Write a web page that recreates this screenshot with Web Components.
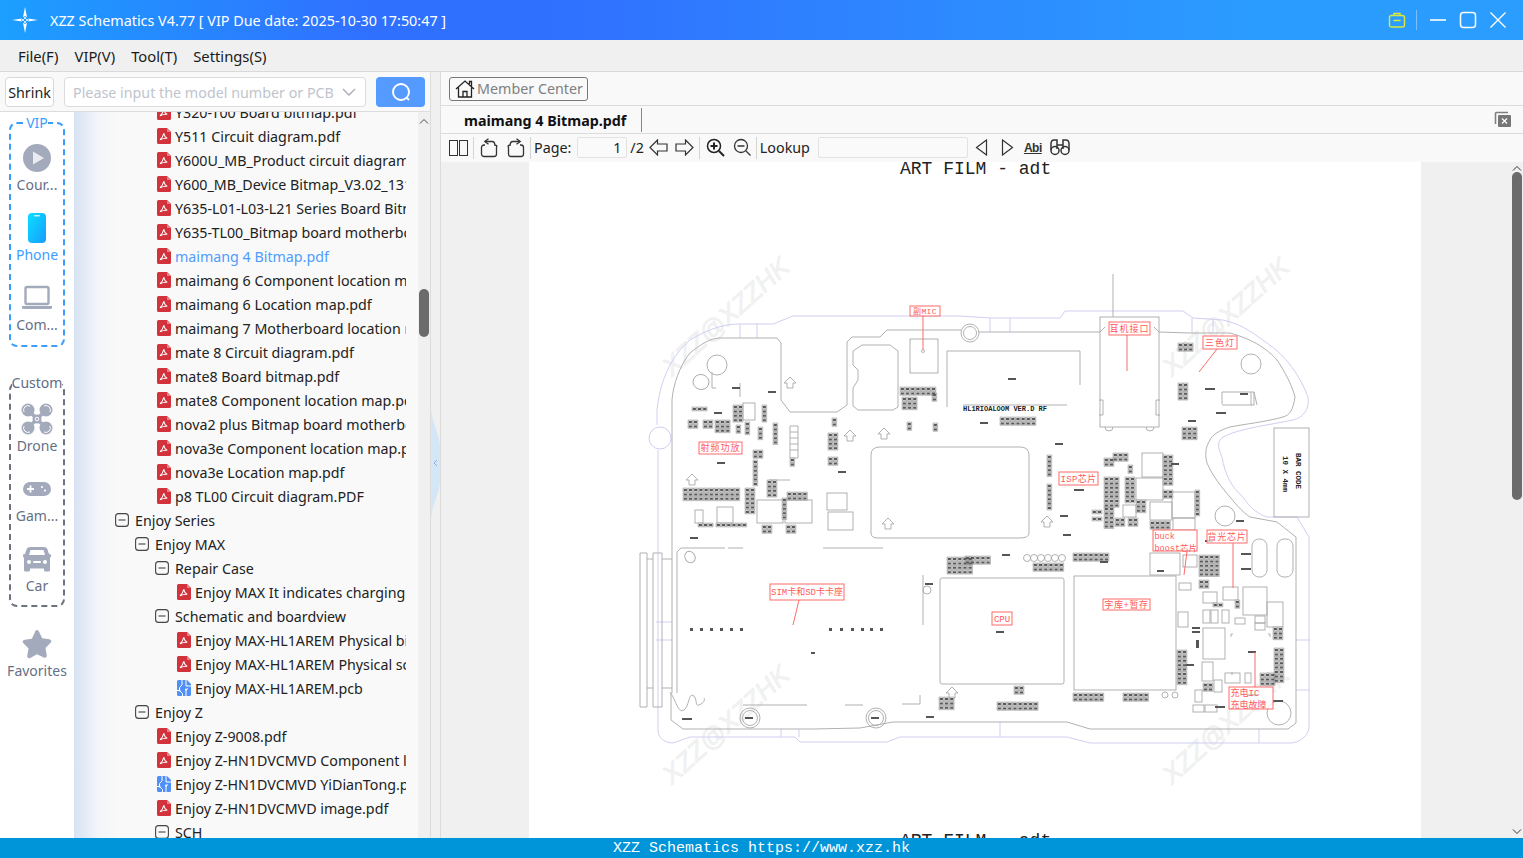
<!DOCTYPE html>
<html>
<head>
<meta charset="utf-8">
<title>XZZ Schematics</title>
<style>
  html, body { margin: 0; height: 100%; overflow: hidden; background: #f0f0f0; font-family: "Noto Sans", "Noto Sans CJK SC", sans-serif; }
  #app { display: grid; grid-template-rows: 40px 32px 1fr 20px; height: 858px; }
  #work { display: flex; min-height: 0; }
  #left { width: 430px; display: flex; flex-direction: column; min-height: 0; }
  #left-body { flex: 1; display: flex; min-height: 0; }
</style>
</head>
<body>
<div id="app">
  <xzz-titlebar>XZZ Schematics V4.77 [ VIP Due date: 2025-10-30 17:50:47 ]</xzz-titlebar>
  <xzz-menubar>
    <span>File(F)</span><span>VIP(V)</span><span>Tool(T)</span><span>Settings(S)</span>
  </xzz-menubar>
  <div id="work">
    <div id="left">
      <xzz-search></xzz-search>
      <div id="left-body">
        <xzz-sidebar>
          <xzz-nav-group label="VIP" tone="blue">
            <xzz-nav-item icon="play">Cour...</xzz-nav-item>
            <xzz-nav-item icon="phone" active>Phone</xzz-nav-item>
            <xzz-nav-item icon="laptop">Com...</xzz-nav-item>
          </xzz-nav-group>
          <xzz-nav-group label="Custom" tone="gray">
            <xzz-nav-item icon="drone">Drone</xzz-nav-item>
            <xzz-nav-item icon="game">Gam...</xzz-nav-item>
            <xzz-nav-item icon="car">Car</xzz-nav-item>
          </xzz-nav-group>
          <xzz-nav-item icon="star" class="fav">Favorites</xzz-nav-item>
        </xzz-sidebar>
        <xzz-tree>
          <tree-row kind="pdf" depth="2">Y320-T00 Board bitmap.pdf</tree-row>
          <tree-row kind="pdf" depth="2">Y511 Circuit diagram.pdf</tree-row>
          <tree-row kind="pdf" depth="2">Y600U_MB_Product circuit diagram.pdf</tree-row>
          <tree-row kind="pdf" depth="2">Y600_MB_Device Bitmap_V3.02_1313.pdf</tree-row>
          <tree-row kind="pdf" depth="2">Y635-L01-L03-L21 Series Board Bitmap.pdf</tree-row>
          <tree-row kind="pdf" depth="2">Y635-TL00_Bitmap board motherboard.pdf</tree-row>
          <tree-row kind="pdf" depth="2" selected>maimang 4 Bitmap.pdf</tree-row>
          <tree-row kind="pdf" depth="2">maimang 6 Component location map.pdf</tree-row>
          <tree-row kind="pdf" depth="2">maimang 6 Location map.pdf</tree-row>
          <tree-row kind="pdf" depth="2">maimang 7 Motherboard location map.pdf</tree-row>
          <tree-row kind="pdf" depth="2">mate 8 Circuit diagram.pdf</tree-row>
          <tree-row kind="pdf" depth="2">mate8 Board bitmap.pdf</tree-row>
          <tree-row kind="pdf" depth="2">mate8 Component location map.pdf</tree-row>
          <tree-row kind="pdf" depth="2">nova2 plus Bitmap board motherboard.pdf</tree-row>
          <tree-row kind="pdf" depth="2">nova3e Component location map.pdf</tree-row>
          <tree-row kind="pdf" depth="2">nova3e Location map.pdf</tree-row>
          <tree-row kind="pdf" depth="2">p8 TL00 Circuit diagram.PDF</tree-row>
          <tree-row kind="open" depth="0">Enjoy Series</tree-row>
          <tree-row kind="open" depth="1">Enjoy MAX</tree-row>
          <tree-row kind="open" depth="2">Repair Case</tree-row>
          <tree-row kind="pdf" depth="3">Enjoy MAX It indicates charging.pdf</tree-row>
          <tree-row kind="open" depth="2">Schematic and boardview</tree-row>
          <tree-row kind="pdf" depth="3">Enjoy MAX-HL1AREM Physical bitmap.pdf</tree-row>
          <tree-row kind="pdf" depth="3">Enjoy MAX-HL1AREM Physical schematic.pdf</tree-row>
          <tree-row kind="pcb" depth="3">Enjoy MAX-HL1AREM.pcb</tree-row>
          <tree-row kind="open" depth="1">Enjoy Z</tree-row>
          <tree-row kind="pdf" depth="2">Enjoy Z-9008.pdf</tree-row>
          <tree-row kind="pdf" depth="2">Enjoy Z-HN1DVCMVD Component location.pdf</tree-row>
          <tree-row kind="pcb" depth="2">Enjoy Z-HN1DVCMVD YiDianTong.pcb</tree-row>
          <tree-row kind="pdf" depth="2">Enjoy Z-HN1DVCMVD image.pdf</tree-row>
          <tree-row kind="open" depth="2">SCH</tree-row>
        </xzz-tree>
      </div>
    </div>
    <xzz-splitter></xzz-splitter>
    <xzz-viewer file="maimang 4 Bitmap.pdf"><xzz-pcb></xzz-pcb></xzz-viewer>
  </div>
  <xzz-statusbar>XZZ Schematics https://www.xzz.hk</xzz-statusbar>
</div>

<script>
const UI_FONT = '"Noto Sans", "Noto Sans CJK SC", sans-serif';

class XzzTitlebar extends HTMLElement {
  constructor() {
    super();
    this.attachShadow({mode: 'open'}).innerHTML = `
      <style>
        :host { display: flex; align-items: center; height: 40px; color: #fff; font: 14.35px ${UI_FONT};
          background: linear-gradient(90deg, #1c9fff 0, #3070ff 24%, #3070ff 36%, #2b9cff 82%, #2b9dff 100%); }
        .logo { margin-left: 12px; width: 26px; height: 26px; }
        .name { margin-left: 12px; flex: 1; white-space: nowrap; }
        .tools { display: flex; align-items: center; }
        .bag { width: 18px; height: 18px; margin-right: 10px; }
        .sep { width: 1px; height: 20px; background: #7cc0ff; margin-right: 12px; }
        .win { width: 18px; height: 18px; margin-right: 12px; }
        .win:last-child { margin-right: 16px; }
      </style>
      <svg class="logo" viewBox="0 0 26 26" fill="#fff">
        <path d="M13 0l2 10.2L13 9l-2 1.2zM13 26l-2-10.2 2 1.2 2-1.2zM0 13l10.2-1.6L9 13l1.2 1.6zM26 13l-10.2 1.6L17 13l-1.2-1.6z"/>
        <circle cx="13" cy="11" r="1"/><circle cx="13" cy="15" r="1"/><circle cx="11" cy="13" r="1"/><circle cx="15" cy="13" r="1"/>
      </svg>
      <div class="name"><slot></slot></div>
      <div class="tools">
        <svg class="bag" viewBox="0 0 18 18" fill="none" stroke="#d9e83a" stroke-width="1.4">
          <rect x="1.5" y="4.5" width="15" height="11.5" rx="2"/><path d="M6 4.5V2.500h6v2M5.5 9.5h7"/>
        </svg>
        <div class="sep"></div>
        <svg class="win" viewBox="0 0 18 18" stroke="#fff" stroke-width="1.6"><path d="M1 9h16"/></svg>
        <svg class="win" viewBox="0 0 18 18" fill="none" stroke="#fff" stroke-width="1.5"><rect x="1.5" y="1.5" width="15" height="15" rx="3"/></svg>
        <svg class="win" viewBox="0 0 18 18" stroke="#fff" stroke-width="1.4"><path d="M1.5 1.5l15 15M16.5 1.5l-15 15"/></svg>
      </div>`;
  }
}
customElements.define('xzz-titlebar', XzzTitlebar);

class XzzMenubar extends HTMLElement {
  constructor() {
    super();
    this.attachShadow({mode: 'open'}).innerHTML = `
      <style>
        :host { display: flex; align-items: center; gap: 16px; box-sizing: border-box; height: 32px; padding: 1px 0 0 18px;
          background: #f0f0f0; border-bottom: 1px solid #d9d9d9; color: #1a1a1a; font: 14.8px ${UI_FONT}; }
      </style>
      <slot></slot>`;
  }
}
customElements.define('xzz-menubar', XzzMenubar);

class XzzSearch extends HTMLElement {
  constructor() {
    super();
    this.attachShadow({mode: 'open'}).innerHTML = `
      <style>
        :host { display: flex; align-items: center; box-sizing: border-box; height: 40px; padding: 1px 5px 0; background: #f9f9f9;
          border-bottom: 1px solid #dcdcdc; font: 14.3px ${UI_FONT}; }
        .shrink { box-sizing: border-box; width: 49px; height: 30px; display: flex; align-items: center; justify-content: center;
          background: #fff; border: 1px solid #d8d8d8; border-radius: 4px; color: #222; }
        .combo { box-sizing: border-box; width: 302px; height: 30px; margin-left: 10px; padding: 0 9px 0 8px; display: flex; align-items: center;
          justify-content: space-between; background: #fff; border: 1px solid #dcdcdc; border-radius: 4px; color: #c0c4cc; white-space: nowrap; }
        .go { width: 49px; height: 30px; margin-left: 10px; background: #559bff; border-radius: 4px; display: flex; align-items: center; justify-content: center; }
      </style>
      <div class="shrink">Shrink</div>
      <div class="combo"><span>Please input the model number or PCB</span>
        <svg width="14" height="8" viewBox="0 0 14 8" fill="none" stroke="#a8adb5" stroke-width="1.4"><path d="M1 1l6 6 6-6"/></svg>
      </div>
      <div class="go"><svg width="20" height="20" viewBox="0 0 20 20" fill="none" stroke="#fff" stroke-width="1.9"><circle cx="10" cy="10" r="8"/><path d="M15.6 15.6l2.4 2.4"/></svg></div>`;
  }
}
customElements.define('xzz-search', XzzSearch);

class XzzSidebar extends HTMLElement {
  constructor() {
    super();
    this.attachShadow({mode: 'open'}).innerHTML = `
      <style>
        :host { display: flex; flex-direction: column; align-items: center; box-sizing: border-box; width: 74px; padding-top: 1px; background: #fff; }
        ::slotted(.fav) { margin-top: 21px; width: 74px; }
      </style>
      <slot></slot>`;
  }
}
customElements.define('xzz-sidebar', XzzSidebar);

class XzzNavGroup extends HTMLElement {
  connectedCallback() {
    if (this.shadowRoot) return;
    const blue = this.getAttribute('tone') === 'blue';
    this.attachShadow({mode: 'open'}).innerHTML = `
      <style>
        :host { display: block; width: 56px; margin-bottom: ${blue ? 26 : 0}px; }
        fieldset { box-sizing: border-box; margin: 0; padding: ${blue ? '9px 0 10px' : '10px 0 9px'}; min-width: 0; width: 56px; border: 2px dashed ${blue ? '#3c9dff' : '#6d7280'}; border-radius: 8px;
          display: flex; flex-direction: column; gap: 17px; align-items: center; }
        legend { padding: 0; margin: 0 auto; line-height: 20px; font: 14px/20px ${UI_FONT}; color: ${blue ? '#3c9dff' : '#616b85'}; white-space: nowrap; }
      </style>
      <fieldset><legend>${this.getAttribute('label')}</legend><slot></slot></fieldset>`;
  }
}
customElements.define('xzz-nav-group', XzzNavGroup);

const NAV_ICONS = {
  play: `<circle cx="16" cy="16" r="14" fill="#a3aabb"/><path d="M12 9.5l11 6.5-11 6.5z" fill="#e9ebf0"/>`,
  phone: `<defs><linearGradient id="ph" x1="0" y1="0" x2="1" y2="1"><stop offset="0" stop-color="#08e0ff"/><stop offset="1" stop-color="#1a9bff"/></linearGradient></defs>
    <rect x="7" y="1" width="18" height="30" rx="4" fill="url(#ph)"/><rect x="13" y="3" width="6" height="1.6" rx=".8" fill="#bff4ff"/>`,
  laptop: `<rect x="4.5" y="5" width="23" height="17" rx="1.5" fill="none" stroke="#a3aabb" stroke-width="2.4"/><path d="M1 24h30v1.4a1.6 1.6 0 0 1-1.6 1.6H2.6A1.6 1.6 0 0 1 1 25.4z" fill="#a3aabb"/>`,
  drone: `<g fill="#a3aabb"><circle cx="7" cy="7" r="6.500"/><circle cx="25" cy="7" r="6.500"/><circle cx="7" cy="25" r="6.500"/><circle cx="25" cy="25" r="6.500"/><circle cx="16" cy="16" r="4.500"/></g><path d="M9 9l14 14M23 9L9 23" stroke="#a3aabb" stroke-width="3.500"/><g fill="none" stroke="#fff" stroke-width="1"><path d="M3 9a4.500 4.500 0 0 1 6-6M29 9a4.500 4.500 0 0 0-6-6M3 23a4.500 4.500 0 0 0 6 6M29 23a4.500 4.500 0 0 1-6 6"/><circle cx="16" cy="16" r="1.800"/></g>`,
  game: `<rect x="2" y="9" width="28" height="14" rx="7" fill="#a3aabb"/><path d="M9.5 12.5v7M6 16h7" stroke="#fff" stroke-width="1.8"/><circle cx="21" cy="14" r="1.1" fill="#fff"/><circle cx="24" cy="17.5" r="1.1" fill="#fff"/>`,
  car: `<path d="M9 4h14c1.700 0 3 1 3.500 2.500L28 11l2 .5v2L29 15v12a1.500 1.500 0 0 1-1.500 1.500h-3A1.500 1.500 0 0 1 23 27v-1.500H9V27a1.500 1.500 0 0 1-1.500 1.500h-3A1.500 1.500 0 0 1 3 27V15l-1-1.500v-2L4 11l1.500-4.500C6 5 7.300 4 9 4z" fill="#a3aabb"/><path d="M9.500 7h13l1.500 5H8z" fill="#fff"/><circle cx="8" cy="19" r="2" fill="#fff"/><circle cx="24" cy="19" r="2" fill="#fff"/><rect x="12" y="18" width="8" height="2" rx="1" fill="#fff"/>`,
  star: `<path d="M16 2c1 0 1.700.8 2.200 1.900l3 6.400 7 1c2.200.3 2.900 2 1.400 3.500l-5.100 5.100 1.200 7.200c.4 2.100-1.100 3.300-3 2.300L16 26.200l-6.700 3.700c-1.900 1-3.400-.2-3-2.300l1.200-7.200-5.100-5.100C.900 13.800 1.600 12.100 3.800 11.800l7-1 3-6.400C14.300 2.800 15 2 16 2z" fill="#a3aabb"/>`
};

class XzzNavItem extends HTMLElement {
  connectedCallback() {
    if (this.shadowRoot) return;
    const active = this.hasAttribute('active');
    this.attachShadow({mode: 'open'}).innerHTML = `
      <style>
        :host { display: flex; flex-direction: column; align-items: center; white-space: nowrap; font: 14px/20px ${UI_FONT}; color: ${active ? '#3c9dff' : '#666f85'}; }
        svg { width: 32px; height: 32px; margin-bottom: 1px; }
      </style>
      <svg viewBox="0 0 32 32">${NAV_ICONS[this.getAttribute('icon')]}</svg>
      <slot></slot>`;
  }
}
customElements.define('xzz-nav-item', XzzNavItem);

class XzzTree extends HTMLElement {
  constructor() {
    super();
    this.attachShadow({mode: 'open'}).innerHTML = `
      <style>
        :host { display: flex; flex: 1; min-width: 0; overflow: hidden; background: linear-gradient(90deg, #d7e2f3 0, #f3f5f9 24px, #f9f9f9 44px); }
        .list { flex: 1; min-width: 0; overflow: hidden; }
        .inner { margin-top: -12px; padding-right: 12px; }
        .bar { width: 12px; box-sizing: border-box; background: #f0f0f0; display: flex; flex-direction: column; align-items: center; padding-top: 6px; }
        .thumb { width: 10px; height: 48px; margin-top: 165px; border-radius: 5px; background: #6b6b6b; }
      </style>
      <div class="list"><div class="inner"><slot></slot></div></div>
      <div class="bar">
        <svg width="10" height="6" viewBox="0 0 10 6" fill="none" stroke="#444" stroke-width="1"><path d="M1 5.500l4-4 4 4"/></svg>
        <div class="thumb"></div>
      </div>`;
  }
}
customElements.define('xzz-tree', XzzTree);

const TREE_ICONS = {
  pdf: `<svg class="file" viewBox="0 0 14 16"><path d="M1.500 0H10l4 4v10.500A1.500 1.500 0 0 1 12.500 16h-11A1.500 1.500 0 0 1 0 14.500v-13A1.500 1.500 0 0 1 1.500 0z" fill="#d2323c"/><path d="M10 0l4 4h-4z" fill="#e98288"/><path d="M6.800 5c-.5 2.500-1.900 5.300-3.800 6.700 2-1 4.700-1.600 7.200-1.500-1.800-.7-3-2.700-3.400-5.200z" fill="none" stroke="#fff" stroke-width="1.100"/></svg>`,
  pcb: `<svg class="file" viewBox="0 0 14 16"><path d="M1.500 0H10l4 4v10.500A1.500 1.500 0 0 1 12.500 16h-11A1.500 1.500 0 0 1 0 14.500v-13A1.500 1.500 0 0 1 1.500 0z" fill="#4f8ff7"/><path d="M5 0v5l-2.500 2.500v3M9 0v6h5M0 10.500h2.500l3 3V16M9 16v-6l2-1.500" fill="none" stroke="#fff" stroke-width="1"/><circle cx="2.500" cy="10.500" r="1" fill="#fff"/><circle cx="9" cy="9.500" r="1" fill="#fff"/></svg>`,
  open: `<svg class="box" viewBox="0 0 14 14" fill="none" stroke="#444" stroke-width="1.100"><rect x=".6" y=".6" width="12.800" height="12.800" rx="3"/><path d="M3.500 7h7"/></svg>`
};

class TreeRow extends HTMLElement {
  connectedCallback() {
    if (this.shadowRoot) return;
    const kind = this.getAttribute('kind');
    const depth = Number(this.getAttribute('depth'));
    const pad = 41 + depth * 20 + (kind === 'open' ? 0 : 2);
    this.attachShadow({mode: 'open'}).innerHTML = `
      <style>
        :host { display: flex; align-items: center; height: 24px; overflow: hidden; white-space: nowrap; padding-left: ${pad}px;
          color: ${this.hasAttribute('selected') ? '#4f9cff' : '#222'}; font: 14.25px ${UI_FONT}; }
        .file { flex: none; width: 14px; height: 16px; margin-right: 4px; }
        .box { flex: none; width: 14px; height: 14px; margin-right: 6px; }
      </style>
      ${TREE_ICONS[kind]}<slot></slot>`;
  }
}
customElements.define('tree-row', TreeRow);

class XzzSplitter extends HTMLElement {
  constructor() {
    super();
    this.attachShadow({mode: 'open'}).innerHTML = `
      <style>
        :host { display: block; box-sizing: border-box; width: 11px; padding-top: 336px; background: #f0f0f0; border-left: 1px solid #dcdcdc; border-right: 1px solid #dcdcdc; }
        svg { display: block; }
      </style>
      <svg width="9" height="112" viewBox="0 0 9 112">
        <path d="M0 0c1 18 9 24 9 40v32c0 16-8 22-9 40z" fill="#d5e6f7"/>
        <path d="M6 52l-3 3 3 3" fill="none" stroke="#8fb0d6" stroke-width="1"/>
      </svg>`;
  }
}
customElements.define('xzz-splitter', XzzSplitter);

class XzzViewer extends HTMLElement {
  connectedCallback() {
    if (this.shadowRoot) return;
    this.attachShadow({mode: 'open'}).innerHTML = `
      <style>
        :host { display: flex; flex-direction: column; flex: 1; min-width: 0; min-height: 0; background: #f9f9f9; color: #222; font: 14.3px ${UI_FONT}; }
        .member { box-sizing: border-box; height: 34px; padding: 5px 0 0 8px; border-bottom: 1px solid #dcdcdc; }
        .member-btn { display: inline-flex; align-items: center; box-sizing: border-box; height: 24px; padding: 0 4px 1px 5px; gap: 2px; border: 1px solid #777; border-radius: 3px; color: #808080; }
        .tabs { box-sizing: border-box; height: 28px; display: flex; justify-content: space-between; border-bottom: 1px solid #dcdcdc; }
        .tab { display: flex; align-items: center; padding: 0 15px 0 23px; border-right: 1px solid #888; font-weight: 700; color: #111; margin: 2px 0 1px; }
        .close { margin: 5px 11px 0 0; }
        .tools { box-sizing: border-box; height: 28px; display: flex; align-items: center; padding: 0 0 1px 8px; }
        .tools svg { flex: none; }
        .sep { width: 1px; height: 22px; background: #d4d4d4; }
        .field { box-sizing: border-box; height: 21px; background: #fafafa; border: 1px solid #e2e2e2; border-radius: 2px; text-align: right; line-height: 19px; }
        .abi { font: 700 12px "Liberation Sans", sans-serif; text-decoration: underline; letter-spacing: -.5px; color: #333; }
        .body { flex: 1; min-height: 0; display: flex; background: #f0f0f0; overflow: hidden; }
        .page { margin-left: 88px; width: 892px; flex: none; }
        .gap { flex: 1; }
        .bar { width: 12px; display: flex; flex-direction: column; align-items: center; justify-content: space-between; padding: 3px 0; box-sizing: border-box; }
        .thumb { width: 10px; height: 328px; border-radius: 5px; background: #6b6b6b; margin-top: 1px; margin-bottom: auto; }
      </style>
      <div class="member">
        <div class="member-btn">
          <svg width="20" height="19" viewBox="0 0 20 19" fill="none" stroke="#222" stroke-width="1.300"><path d="M1 10L10 2l9 8M3.500 8.500V18h13V8.500M8 18v-5.500h4V18M14.500 5V2.500h2V7"/></svg>
          Member Center
        </div>
      </div>
      <div class="tabs">
        <div class="tab">${this.getAttribute('file')}</div>
        <svg class="close" width="18" height="17" viewBox="0 0 18 17"><path d="M1.500 13V2.500a1 1 0 0 1 1-1H14" fill="none" stroke="#808080" stroke-width="1.600"/><rect x="4" y="4" width="13" height="12" rx="1" fill="#777"/><path d="M8 7.500l5 5M13 7.500l-5 5" stroke="#fff" stroke-width="1.200"/></svg>
      </div>
      <div class="tools">
        <svg width="19" height="16" viewBox="0 0 19 16" fill="none" stroke="#333"><rect x=".5" y=".5" width="8" height="15"/><rect x="10.500" y=".5" width="8" height="15"/></svg>
        <div class="sep" style="margin:0 6px 0 5px"></div>
        <svg width="18" height="20" viewBox="0 0 18 20" fill="none" stroke="#333" stroke-width="1.300"><path d="M15 7.500a1 1 0 0 1 1.500 1.500v7a2.500 2.500 0 0 1-2.500 2.500H4A2.500 2.500 0 0 1 1.500 16V9.500A2.500 2.500 0 0 1 4 7h1M15 8c0-3-1-4.500-3-4.500H5"/><path d="M8.500.8L4.800 3.500l3.700 2.700"/></svg>
        <svg width="18" height="20" viewBox="0 0 18 20" fill="none" stroke="#333" stroke-width="1.300" style="margin-left:9px"><path d="M3 7.500A1 1 0 0 0 1.500 9v7A2.500 2.500 0 0 0 4 18.500h10a2.500 2.500 0 0 0 2.500-2.500V9.500A2.500 2.500 0 0 0 14 7h-1M3 8c0-3 1-4.500 3-4.500h7"/><path d="M9.500.8l3.700 2.700-3.700 2.700"/></svg>
        <div class="sep" style="margin:0 3px 0 5px"></div>
        <span>Page:</span>
        <div class="field" style="width:50px;margin-left:6px;padding-right:5px">1</div>
        <span style="margin-left:3px">/2</span>
        <svg width="19" height="17" viewBox="0 0 19 17" fill="none" stroke="#333" stroke-width="1.200" style="margin-left:5px"><path d="M8.500 1L1 8.500 8.500 16v-4H18V5H8.500z"/></svg>
        <svg width="19" height="17" viewBox="0 0 19 17" fill="none" stroke="#333" stroke-width="1.200" style="margin-left:7px"><path d="M10.500 1L18 8.500 10.500 16v-4H1V5h9.500z"/></svg>
        <div class="sep" style="margin:0 6px 0 5px"></div>
        <svg width="19" height="19" viewBox="0 0 19 19" fill="none" stroke="#222" stroke-width="1.500"><circle cx="8" cy="8" r="6.500"/><path d="M13 13l5 5" stroke-width="2"/><path d="M4.500 8h7M8 4.500v7" stroke-width="2"/></svg>
        <svg width="18" height="19" viewBox="0 0 18 19" fill="none" stroke="#333" stroke-width="1.300" style="margin-left:8px"><circle cx="8" cy="8" r="6.500"/><path d="M13 13l4.500 4.500"/><path d="M4.500 8h7" stroke-width="1.500"/></svg>
        <div class="sep" style="margin:0 3px 0 5px"></div>
        <span>Lookup</span>
        <div class="field" style="width:150px;margin-left:8px"></div>
        <svg width="13" height="17" viewBox="0 0 13 17" fill="none" stroke="#333" stroke-width="1.200" style="margin-left:7px"><path d="M11.500 1L1.500 8.500l10 7.500z"/></svg>
        <svg width="13" height="17" viewBox="0 0 13 17" fill="none" stroke="#333" stroke-width="1.200" style="margin-left:13px"><path d="M1.500 1l10 7.500-10 7.500z"/></svg>
        <span class="abi" style="margin-left:10px">Abi</span>
        <svg width="20" height="17" viewBox="0 0 20 17" fill="none" stroke="#333" stroke-width="1.500" style="margin-left:8px"><circle cx="5" cy="11.500" r="4"/><circle cx="15" cy="11.500" r="4"/><path d="M1 11V5c0-2.500 1.500-4 3-4h3v9M19 11V5c0-2.500-1.500-4-3-4h-3v9M7 6h6"/></svg>
      </div>
      <div class="body">
        <div class="page"><slot></slot></div>
        <div class="gap"></div>
        <div class="bar">
          <svg width="10" height="6" viewBox="0 0 10 6" fill="none" stroke="#333"><path d="M1 5.500l4-4 4 4"/></svg>
          <div class="thumb"></div>
          <svg width="10" height="6" viewBox="0 0 10 6" fill="none" stroke="#333"><path d="M1 .5l4 4 4-4"/></svg>
        </div>
      </div>`;
  }
}
customElements.define('xzz-viewer', XzzViewer);

class XzzPcb extends HTMLElement {
  connectedCallback() {
    if (this.shadowRoot) return;
    // all drawing numbers are window coordinates, the viewBox maps them onto the page
    let cellBox = '', cellInk = '', marks = '', boxes = '', circles = '', arrows = '';

    const cells = (x0, y0, x1, y1) => {
      const cw = 5.2, ch = 4.4;
      for (let y = y0; y + ch <= y1 + 1; y += ch) {
        for (let x = x0; x + cw <= x1 + 1.5; x += cw) {
          cellBox += `M${x.toFixed(1)} ${y.toFixed(1)}h${cw - .5}v${ch - .5}h${.5 - cw}z`;
          cellInk += `M${(x + .8).toFixed(1)} ${(y + 1).toFixed(1)}h${(cw - 2.1).toFixed(1)}v2h${(2.1 - cw).toFixed(1)}z`;
        }
      }
    };
    const box = (x, y, w, h, r = 0) => { boxes += `<rect x="${x}" y="${y}" width="${w}" height="${h}" rx="${r}"/>`; };
    const mark = (x, y, w = 7, h = 2) => { marks += `<rect x="${x}" y="${y}" width="${w}" height="${h}"/>`; };
    const circle = (x, y, r) => { circles += `<circle cx="${x}" cy="${y}" r="${r}"/>`; };
    const arrow = (x, y) => { arrows += `<path d="M${x} ${y - 5}l6 6h-3v5h-6v-5h-3z"/>`; };

    [[683,488,742,502],[745,488,755,517],[753,450,765,458],[753,460,758,487],[758,427,766,440],[733,405,743,423],
     [762,405,768,422],[715,420,732,433],[688,420,698,432],[692,407,707,412],[745,422,753,437],[828,433,838,453],
     [828,457,837,465],[787,492,810,500],[790,458,798,468],[767,480,780,500],[900,387,938,397],[902,397,920,413],
     [932,393,937,403],[907,422,911,432],[933,423,937,432],[832,418,837,427],[773,423,778,445],[716,523,747,530],
     [762,525,775,533],[786,525,799,535],[1047,455,1055,478],[1047,484,1055,510],[1104,458,1113,468],[1104,477,1123,507],
     [1113,453,1128,465],[1178,343,1195,353],[1178,383,1190,402],[1182,427,1200,443],[1000,417,1035,428],[1092,517,1102,522],
     [1163,455,1172,487],[1195,490,1200,517],[1073,553,1108,563],[1033,563,1063,575],[1014,686,1027,695],[997,702,1040,712],
     [1073,693,1107,703],[1123,693,1150,703],[1177,650,1187,687],[1274,648,1283,685],[1260,673,1275,687],[1199,555,1220,580],
     [939,697,958,712],[947,557,975,577],[965,556,990,565],[1235,600,1243,610],[1150,521,1172,529],
     [736,425,742,435],[698,523,715,530],[703,420,715,430],[782,498,787,520],[1104,507,1115,530],[1125,477,1136,505],
     [1163,490,1172,500],[1136,500,1150,515],[1213,603,1223,608],[1273,627,1283,643],[1203,683,1213,692],[1199,580,1210,590],
     [1128,465,1136,477],[1092,510,1102,517],[1115,518,1128,530],[1128,518,1142,530]
    ].forEach(c => cells(...c));

    [[910,339,28,34],[1142,453,21,24],[1136,478,27,22],[1172,492,23,26],[1150,502,22,18],[1173,518,22,12],[1123,505,13,12],
     [1150,553,30,22],[1243,587,24,28],[1203,628,22,31],[1202,662,11,19],[1267,602,16,25],[1225,673,15,10],[1183,555,14,12],
     [1223,587,15,13],[1203,592,14,11],[1203,610,7,13],[1211,610,7,13],[1222,610,7,13],[1235,618,10,6],[1255,616,10,7],[1255,623,10,7],
     [1214,680,8,12],[1195,690,7,12],[1193,705,11,7],[1205,705,12,7],[1245,673,6,10],[1178,612,10,15],[1179,583,12,7],
     [717,507,16,16],[695,510,8,13],[757,500,26,23],[785,500,27,23],[827,493,20,17],[828,512,25,18],[743,403,12,17]
    ].forEach(b => box(b[0], b[1], b[2], b[3]));
    box(940, 578, 124, 106, 2);
    box(1074, 576, 102, 114);
    box(1252, 539, 15, 38, 7);
    box(1277, 539, 16, 38, 7);
    box(1274, 428, 35, 89);
    box(1100, 317, 59, 110);

    [[717,365,10],[1251,364,10],[1225,516,10],[1279,713,12],[750,718,10],[750,718,7.5],[876,718,10],[876,718,7.5],
     [927,590,4],[970,333,9],[970,333,6.5],[1027,558,3.5],[1034,558,3.5],[1041,558,3.5],[1048,558,3.5],[1055,558,3.5],[1062,558,3.5],
     [1165,695,3],[1175,695,3]
    ].forEach(c => circle(...c));

    [[790,382],[850,435],[884,433],[692,479],[888,523],[1047,521],[952,692]].forEach(a => arrow(...a));

    [[732,387,8],[768,391,8],[714,412,8],[717,462,8],[838,471,8],[1008,378,8],[980,422,8],[1055,443,8],
     [1240,393,8],[1205,388,10],[1188,420,8],[1216,412,10],[1060,515,8],[1074,489,10],[1171,463,8],
     [690,537,8],[682,718,10],[811,652,4],[745,717,8],[871,717,8],[996,631,8],[1100,561,8],
     [925,583,8],[926,716,8],[1186,664,8],[1248,651,8],[1247,694,10],[1236,520,8],[1002,554,8],[1063,534,8],
     [1157,570,7],[1205,540,8],[1241,553,10],[1241,568,10],[1215,706,10],[1273,700,10],[1192,627,8,2],[1192,631,8,2],[1196,640,3,8]
    ].forEach(m => mark(...m));
    // SIM pads in two rows
    [690,700,710,720,730,740,829,840,851,861,870,880].forEach(x => mark(x, 628, 3, 3));

    const tag = (x, y, w, h, text, size = 9, sp = 0, lines) => {
      const t = lines
        ? lines.map((l, i) => `<text x="${x + 1.5}" y="${y + 9 + i * 11.5}">${l}</text>`).join('')
        : `<text x="${x + w / 2}" y="${y + h / 2 + size * .36}" text-anchor="middle" letter-spacing="${sp}">${text}</text>`;
      return `<rect x="${x}" y="${y}" width="${w}" height="${h}" fill="#fff" fill-opacity=".75" stroke="#ff6b6b" stroke-width="1"/><g font-size="${size}">${t}</g>`;
    };

    const wm = (x, y) => `<text x="${x}" y="${y}" transform="rotate(-42 ${x} ${y})">XZZ@XZZHK</text>`;

    this.attachShadow({mode: 'open'}).innerHTML = `
      <style>
        :host { display: block; width: 892px; height: 676px; background: #fff; overflow: hidden; }
        svg { display: block; }
      </style>
      <svg width="892" height="676" viewBox="529 162 892 676">
        <g font-family="'Liberation Sans', sans-serif" font-style="italic" font-size="26" fill="#f3f3f3" stroke="#ececec" stroke-width=".5">
          ${wm(672,377)}${wm(1172,377)}${wm(672,785)}${wm(1172,785)}
        </g>
        <text x="900" y="174" font-family="'Liberation Mono', monospace" font-size="18" fill="#222">ART FILM - adt</text>
        <text x="900" y="846" font-family="'Liberation Mono', monospace" font-size="18" fill="#222">ART FILM - adt</text>

        <g fill="none" stroke="#cfcff2" stroke-width="1">
          <path d="M657 425V410C660 380 672 355 690 340C710 328 725 324 740 324H773L793 316H960L990 318H1060L1065 311H1183L1193 318L1223 320C1245 325 1255 335 1267 343C1285 355 1300 375 1308 397C1310 410 1302 418 1293 420C1270 425 1240 428 1223 437C1215 442 1220 452 1222 457C1225 475 1232 488 1243 497C1250 508 1258 514 1267 517H1297L1309 537V727C1309 735 1300 743 1290 743H1090L1067 737H900L887 742H800L795 737H690L673 743C665 743 658 738 658 730V450"/>
          <circle cx="660" cy="438" r="11"/>
          <path d="M740 324V338M757 323V338M1192 318V333M1213 320V333M990 318V332M1010 318V332M1310 640H1296M1310 690H1296M1000 737V722M781 737V729M799 737V729M1259 743V729M656 622H672M656 640H672"/>
        </g>

        <g fill="none" stroke="#a8a8a8" stroke-width=".9">
          <path d="M672 693V400C673 385 680 365 690 353C700 345 710 338 720 338H777L781 343V400L790 412H837L847 405V342L852 337H880L887 330H961M979 332H1100M1159 332L1190 333L1230 333C1255 340 1268 350 1277 360C1285 372 1292 385 1295 397C1293 410 1290 415 1283 417C1265 422 1245 424 1230 427C1220 430 1212 435 1210 440C1205 448 1205 455 1207 463C1212 475 1222 488 1230 497C1238 507 1244 513 1250 517L1277 522L1287 530L1296 537V723L1288 729H1090L1067 722H893L860 728L813 729H683L671 720V693"/>
          <path d="M853 351L862 345H890L898 351V407L893 410H858L853 406V388L858 380V370L853 365z"/>
          <path d="M947 407V351H1080V385"/>
          <path d="M963 405H1067"/>
          <path d="M871 533V455Q871 447 880 447H1020Q1029 447 1029 455V533Q1029 538 1020 538H878Q871 538 871 533z"/>
          <path d="M677 693V552L681 548H725M728 548H743M823 548H883"/>
          <path d="M640 553h7v154h-7zM653 553h9v154h-9zM647 559h6M662 559h10M647 688h6M662 688h10"/>
          <path d="M670 692c6 8 8 22 14 18 6-5 4-18 10-14 4 5 0 12 7 8 3-2 4-4 3-6M743 705H807M845 705H863M902 704H920V695"/>
          <path d="M923 625V575M1099 400H1103V415H1099M1160 400H1156V415H1160M1105 427a4 4 0 0 0 8 0M1146 427a4 4 0 0 0 8 0M1100 332L1105 327M1159 332L1154 327"/>
          <path d="M1222 392V404M1222 392H1254V405H1222M1254 392L1257 405M1251 392V405"/>
          <path d="M1113 274V317"/>
          <ellipse cx="701" cy="382" rx="8" ry="7.500" transform="rotate(15 701 382)"/>
          <ellipse cx="690" cy="557" rx="5" ry="6" transform="rotate(-30 690 557)"/>
          <path d="M712 372v16h4M740 383v14M790 426h8v32h-8zM790 432h8M790 438h8M790 444h8M790 450h8M769 480h21"/>
          <path d="M1233 634h-2v3M1268 634h2v3M1232 672v3M1268 672v3"/>
        </g>
        <g fill="none" stroke="#a8a8a8" stroke-width=".9">${boxes}${circles}${arrows}</g>
        <path d="${cellBox}" fill="#e2e2e2" stroke="#8a8a8a" stroke-width=".5"/>
        <path d="${cellInk}" fill="#5a5a5a"/>
        <g fill="#555">${marks}</g>

        <g font-family="'Liberation Mono', monospace" font-weight="700" fill="#222">
          <text x="963" y="411" font-size="7">HL1RIOALOOM VER.D RF</text>
          <text transform="translate(1296 453) rotate(90)" font-size="7.500">BAR CODE</text>
          <text transform="translate(1283 456) rotate(90)" font-size="7.500">10 X 4mm</text>
        </g>

        <g stroke="#ff6b6b" stroke-width="1" fill="none">
          <path d="M923 316V351M1127 335V371M1217 349L1199 372M1187 551L1184 575M1233 543V588M799 600L793 625M1255 687V652"/>
        </g>
        <circle cx="923" cy="351" r="1.500" fill="#fff" stroke="#888" stroke-width=".6"/>
        <g font-family="'Liberation Mono', 'Noto Sans CJK SC', monospace" fill="#ff5a5a">
          ${tag(910,306,30,10,'副MIC',8,.4)}
          ${tag(1109,322,41,13,'耳机接口',9,1)}
          ${tag(1203,336,34,13,'三色灯',9,1)}
          ${tag(699,442,43,12,'射频功放',9,1)}
          ${tag(1059,472,39,13,'ISP芯片',9,.4)}
          ${tag(1153,530,44,21,'',8.500,0,['buck','boost芯片'])}
          ${tag(1207,530,40,13,'背光芯片',9,.8)}
          ${tag(770,584,74,16,'SIM卡和SD卡卡座',9,0)}
          ${tag(992,612,20,13,'CPU',9)}
          ${tag(1103,599,47,11,'字库+暂存',9,.6)}
          ${tag(1229,687,44,22,'',9,0,['充电IC','充电故障'])}
        </g>
      </svg>`;
  }
}
customElements.define('xzz-pcb', XzzPcb);

class XzzStatusbar extends HTMLElement {
  constructor() {
    super();
    this.attachShadow({mode: 'open'}).innerHTML = `
      <style>
        :host { position: relative; z-index: 1; display: flex; align-items: center; justify-content: center; box-sizing: border-box; height: 20px; padding-top: 1px; background: #0094d9; color: #fff;
          font: 15px "Liberation Mono", monospace; white-space: nowrap; }
      </style>
      <slot></slot>`;
  }
}
customElements.define('xzz-statusbar', XzzStatusbar);
</script>
</body>
</html>
